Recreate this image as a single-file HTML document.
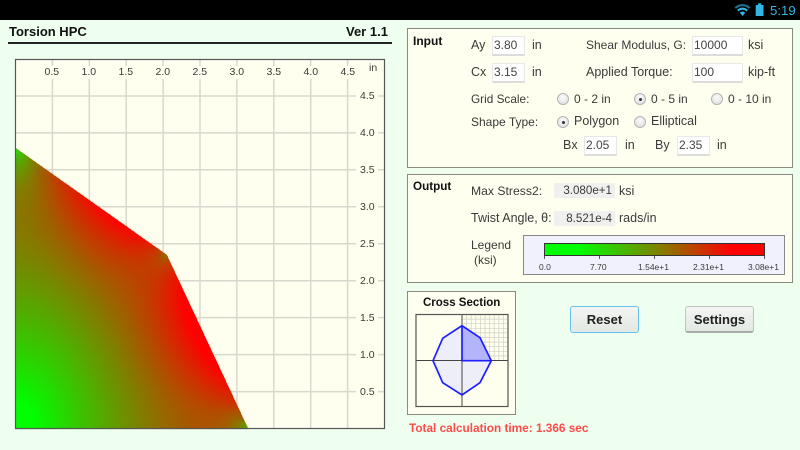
<!DOCTYPE html>
<html><head><meta charset="utf-8">
<style>
html,body{margin:0;padding:0;width:800px;height:450px;overflow:hidden;background:#eeffef}
body{position:relative;font-family:"Liberation Sans",sans-serif;color:#333}
.t{position:absolute;white-space:nowrap;font-size:12px;line-height:16px;height:16px;color:#3a3a3a}
.b{font-weight:bold;color:#111}
.p{position:absolute;background:#ffffef;border:1px solid #8a8a80;box-sizing:border-box}
.i{position:absolute;background:#fff;border:1px solid #e8e8e8;border-bottom:2px solid #dcdcdc;box-sizing:border-box;font-size:12px;line-height:16px;color:#444;padding-left:1px}
.o{position:absolute;background:#f0f0ee;font-size:11.6px;line-height:15px;height:15px;text-align:right;padding-right:3px;box-sizing:border-box;color:#3a3a3a}
.r{position:absolute;width:12px;height:12px;border-radius:50%;box-sizing:border-box;background:radial-gradient(circle at 50% 35%,#fafafa,#ddd);border:1px solid #b4b4b4}
.r.on:after{content:"";position:absolute;left:3.5px;top:3.5px;width:3px;height:3px;border-radius:50%;background:#333}
.btn{position:absolute;width:69px;height:27px;box-sizing:border-box;border-radius:3px;background:linear-gradient(#f3f5f2,#e2e8e2);text-align:center;font-weight:bold;font-size:13px;line-height:25px;color:#222}
.l{position:absolute;font-size:8.5px;line-height:10px;color:#3a3a3a;white-space:nowrap}
.a{position:absolute;font-size:10.5px;line-height:11px;color:#3a3a3a;white-space:nowrap}
svg,canvas{position:absolute;left:0;top:0}
</style></head><body>

<div style="position:absolute;left:0;top:0;width:800px;height:20px;background:#000"></div>
<svg width="800" height="20" viewBox="0 0 800 20">
<path d="M735.2 8 Q742.5 2.2 749.8 8" fill="none" stroke="#1c6d8c" stroke-width="2.2"/>
<path d="M737.8 10.6 Q742.5 6.8 747.2 10.6" fill="none" stroke="#33b5e5" stroke-width="2"/>
<path d="M739.8 12.6 Q742.5 10.4 745.2 12.6 L742.5 16Z" fill="#33b5e5"/>
<rect x="755.7" y="5" width="7.8" height="11" fill="#33b5e5"/><rect x="758" y="3.4" width="3.2" height="2" fill="#33b5e5"/>
</svg>
<div class="t" style="left:770px;top:3px;font-size:13.2px;color:#33b5e5;line-height:16px">5:19</div>

<div class="t b" style="left:9px;top:24px;font-size:13px">Torsion HPC</div>
<div class="t b" style="left:346px;top:24px;font-size:13px">Ver 1.1</div>
<div style="position:absolute;left:8px;top:42px;width:384px;height:1.5px;background:#222"></div>

<svg width="800" height="450" viewBox="0 0 800 450">
<defs><linearGradient id="fb" gradientUnits="userSpaceOnUse" x1="15" y1="428" x2="190" y2="300"><stop offset="0" stop-color="#0f0"/><stop offset="1" stop-color="#f00"/></linearGradient></defs>
<rect x="15.5" y="59.5" width="369" height="369" fill="#ffffef"/>
<g stroke="#d8d8ce" stroke-width="1.5" fill="none">
<path d="M52.4 59V66M52.4 79V428M89.3 59V66M89.3 79V428M126.2 59V66M126.2 79V428M163.1 59V66M163.1 79V428M200 59V66M200 79V428M236.9 59V66M236.9 79V428M273.8 59V66M273.8 79V428M310.7 59V66M310.7 79V428M347.6 59V66M347.6 79V428"/>
<path d="M15 96H356M378 96H384M15 132.9H356M378 132.9H384M15 169.8H356M378 169.8H384M15 206.8H356M378 206.8H384M15 243.8H356M378 243.8H384M15 280.7H356M378 280.7H384M15 317.6H356M378 317.6H384M15 354.6H356M378 354.6H384M15 391.6H356M378 391.6H384"/>
</g>
<polygon points="15.5,148 166.8,255 248,428.5 15.5,428.5" fill="url(#fb)"/>
</svg>
<canvas id="c" width="240" height="295" style="left:15px;top:140px"></canvas>
<svg width="800" height="450" viewBox="0 0 800 450"><rect x="15.5" y="59.5" width="369" height="369" fill="none" stroke="#555" stroke-width="1.2"/></svg>

<div class="a" style="left:44.5px;top:67px">0.5</div>
<div class="a" style="left:81.5px;top:67px">1.0</div>
<div class="a" style="left:118.5px;top:67px">1.5</div>
<div class="a" style="left:155.5px;top:67px">2.0</div>
<div class="a" style="left:192.5px;top:67px">2.5</div>
<div class="a" style="left:229.5px;top:67px">3.0</div>
<div class="a" style="left:266.5px;top:67px">3.5</div>
<div class="a" style="left:303.5px;top:67px">4.0</div>
<div class="a" style="left:340.5px;top:67px">4.5</div>
<div class="a" style="left:369px;top:63px">in</div>
<div class="a" style="left:360px;top:91px">4.5</div>
<div class="a" style="left:360px;top:128px">4.0</div>
<div class="a" style="left:360px;top:165px">3.5</div>
<div class="a" style="left:360px;top:202px">3.0</div>
<div class="a" style="left:360px;top:239px">2.5</div>
<div class="a" style="left:360px;top:276px">2.0</div>
<div class="a" style="left:360px;top:313px">1.5</div>
<div class="a" style="left:360px;top:350px">1.0</div>
<div class="a" style="left:360px;top:387px">0.5</div>

<!-- Input -->
<div class="p" style="left:407px;top:28px;width:386px;height:140px"></div>
<div class="t b" style="left:413px;top:33px;font-size:12px">Input</div>
<div class="t" style="left:471px;top:37px;font-size:12.5px">Ay</div>
<div class="i" style="left:492px;top:36px;width:33px;height:20px">3.80</div>
<div class="t" style="left:532px;top:37px;font-size:12.5px">in</div>
<div class="t" style="left:586px;top:37px">Shear Modulus, G:</div>
<div class="i" style="left:692px;top:36px;width:51px;height:20px">10000</div>
<div class="t" style="left:748px;top:37px;font-size:12.5px">ksi</div>
<div class="t" style="left:471px;top:64px;font-size:12.5px">Cx</div>
<div class="i" style="left:492px;top:63px;width:33px;height:20px">3.15</div>
<div class="t" style="left:532px;top:64px;font-size:12.5px">in</div>
<div class="t" style="left:586px;top:64px;font-size:12.5px">Applied Torque:</div>
<div class="i" style="left:692px;top:63px;width:51px;height:20px">100</div>
<div class="t" style="left:748px;top:64px;font-size:12.5px">kip-ft</div>
<div class="t" style="left:471px;top:91px;font-size:11.8px">Grid Scale:</div>
<div class="r" style="left:557px;top:93px"></div><div class="t" style="left:574px;top:91px">0 - 2 in</div>
<div class="r on" style="left:634px;top:93px"></div><div class="t" style="left:651px;top:91px">0 - 5 in</div>
<div class="r" style="left:711px;top:93px"></div><div class="t" style="left:728px;top:91px">0 - 10 in</div>
<div class="t" style="left:471px;top:114px">Shape Type:</div>
<div class="r on" style="left:557px;top:116px"></div><div class="t" style="left:574px;top:113px;font-size:12.5px">Polygon</div>
<div class="r" style="left:634px;top:116px"></div><div class="t" style="left:651px;top:113px;font-size:12.5px">Elliptical</div>
<div class="t" style="left:563px;top:137px;font-size:12.5px">Bx</div>
<div class="i" style="left:584px;top:136px;width:33px;height:20px">2.05</div>
<div class="t" style="left:625px;top:137px;font-size:12.5px">in</div>
<div class="t" style="left:655px;top:137px;font-size:12.5px">By</div>
<div class="i" style="left:677px;top:136px;width:33px;height:20px">2.35</div>
<div class="t" style="left:717px;top:137px;font-size:12.5px">in</div>

<!-- Output -->
<div class="p" style="left:407px;top:174px;width:386px;height:109px"></div>
<div class="t b" style="left:413px;top:179px;font-size:11.7px">Output</div>
<div class="t" style="left:471px;top:183px;font-size:12.2px">Max Stress2:</div>
<div class="o" style="left:554px;top:183px;width:61px">3.080e+1</div>
<div class="t" style="left:619px;top:183px;font-size:12.5px">ksi</div>
<div class="t" style="left:471px;top:210px;font-size:12.5px">Twist Angle, θ:</div>
<div class="o" style="left:554px;top:211px;width:61px">8.521e-4</div>
<div class="t" style="left:619px;top:210px;font-size:12.5px">rads/in</div>
<div class="t" style="left:471px;top:237px">Legend</div>
<div class="t" style="left:474px;top:252px">(ksi)</div>
<div style="position:absolute;left:523px;top:235px;width:262px;height:40px;box-sizing:border-box;background:#f1f1fd;border:1px solid #888"></div>
<div style="position:absolute;left:544px;top:243px;width:221px;height:13px;box-sizing:border-box;border:1px solid #333;background:linear-gradient(90deg,#0f0 15%,#808000 52%,#f00 85%)"></div>
<svg width="800" height="450" viewBox="0 0 800 450"><path d="M544.5 256v3M599.5 256v3M654.5 256v3M709.5 256v3M764.5 256v3" stroke="#555" fill="none"/></svg>
<div class="l" style="left:539px;top:261.5px">0.0</div>
<div class="l" style="left:590px;top:261.5px">7.70</div>
<div class="l" style="left:638px;top:261.5px">1.54e+1</div>
<div class="l" style="left:693px;top:261.5px">2.31e+1</div>
<div class="l" style="left:748px;top:261.5px">3.08e+1</div>

<!-- Cross section -->
<div class="p" style="left:407px;top:291px;width:109px;height:124px"></div>
<div class="t b" style="left:423px;top:295px;font-size:11.5px">Cross Section</div>
<svg width="800" height="450" viewBox="0 0 800 450">
<g stroke="#cfcfc4" stroke-width=".7" fill="none">
<path d="M466.6 314.5V360.5M471.2 314.5V360.5M475.8 314.5V360.5M480.4 314.5V360.5M485 314.5V360.5M489.6 314.5V360.5M494.2 314.5V360.5M498.8 314.5V360.5M503.4 314.5V360.5"/>
<path d="M462 319.1H508M462 323.7H508M462 328.3H508M462 332.9H508M462 337.5H508M462 342.1H508M462 346.7H508M462 351.3H508M462 355.9H508"/>
</g>
<polygon points="462,325.7 480,337.7 491.3,360.7 480,382.7 462,395 442.7,382.7 433,360.7 442.7,338.3" fill="#eeeef8"/>
<polygon points="462,325.7 480,337.7 491.3,360.7 462,360.7" fill="#b4b4fa"/>
<path d="M462 314.5V406.5M416 360.5H508" stroke="#444" fill="none"/>
<rect x="416" y="314.5" width="92" height="92" fill="none" stroke="#555" stroke-width="1.2"/>
<polygon points="462,325.7 480,337.7 491.3,360.7 480,382.7 462,395 442.7,382.7 433,360.7 442.7,338.3" fill="none" stroke="#1e1eff" stroke-width="1.7"/>
<path d="M462 325.7V360.7H491.3" fill="none" stroke="#1e1eff" stroke-width="1.7"/>
</svg>

<div class="btn" style="left:570px;top:306px;border:1px solid #66c2ee">Reset</div>
<div class="btn" style="left:685px;top:306px;border:1px solid #c0c4c0;border-bottom:2px solid #a8aca8">Settings</div>
<div class="t" style="left:409px;top:420px;font-size:11.8px;font-weight:bold;color:#ff4a4a">Total calculation time: 1.366 sec</div>

<script>
(function(){
var W=236,H=284;
function inside(x,y){
  if(x<0||y<0)return false;
  if(y>280.5-(107/151.3)*x)return false;
  if(x>232.5-(81.2/173.5)*y)return false;
  return true;
}
var n=W*H,p=new Float64Array(n),m=new Uint8Array(n),i,j,k,it;
for(j=0;j<H;j++)for(i=0;i<W;i++)m[j*W+i]=inside(i,j)?1:0;
var w=1.975;
for(it=0;it<1500;it++){
  for(j=0;j<H-1;j++)for(i=0;i<W-1;i++){
    k=j*W+i;if(!m[k])continue;
    var a=p[k+1],b=i>0?p[k-1]:p[k+1],c=p[k+W],d=j>0?p[k-W]:p[k+W];
    p[k]+=w*((a+b+c+d+2)/4-p[k]);
  }
}
var s=new Float64Array(n);
for(j=0;j<H-1;j++)for(i=0;i<W-1;i++){
  k=j*W+i;if(!m[k])continue;
  var gx=i>0?(p[k+1]-p[k-1])/2:0,gy=j>0?(p[k+W]-p[k-W])/2:0;
  s[k]=Math.sqrt(gx*gx+gy*gy);
}
var R=3,q=new Float64Array(n),max=0;
for(j=0;j<H-1;j++)for(i=0;i<W-1;i++){
  k=j*W+i;if(!m[k])continue;
  var t=0,c2=0;
  for(var y=Math.max(0,j-R);y<=Math.min(H-1,j+R);y++)for(var x=Math.max(0,i-R);x<=Math.min(W-1,i+R);x++){
    var h=y*W+x;if(m[h]){t+=s[h];c2++}
  }
  q[k]=t/c2;if(q[k]>max)max=q[k];
}
var cv=document.getElementById('c'),g=cv.getContext('2d'),im=g.createImageData(240,295),D=im.data;
for(var py=0;py<295;py++)for(var px=0;px<240;px++){
  var ix=px,jy=288-py;
  if(ix<0||jy<0||ix>=W-1||jy>=H-1)continue;
  k=jy*W+ix;if(!m[k])continue;
  var v=(q[k]/max-0.08)/0.86;
  v=v<0?0:(v>1?1:v);
  var o=(py*240+px)*4;
  D[o]=255*v;D[o+1]=255*(1-v);D[o+2]=0;D[o+3]=255;
}
g.putImageData(im,0,0);
})();
</script>
</body></html>
